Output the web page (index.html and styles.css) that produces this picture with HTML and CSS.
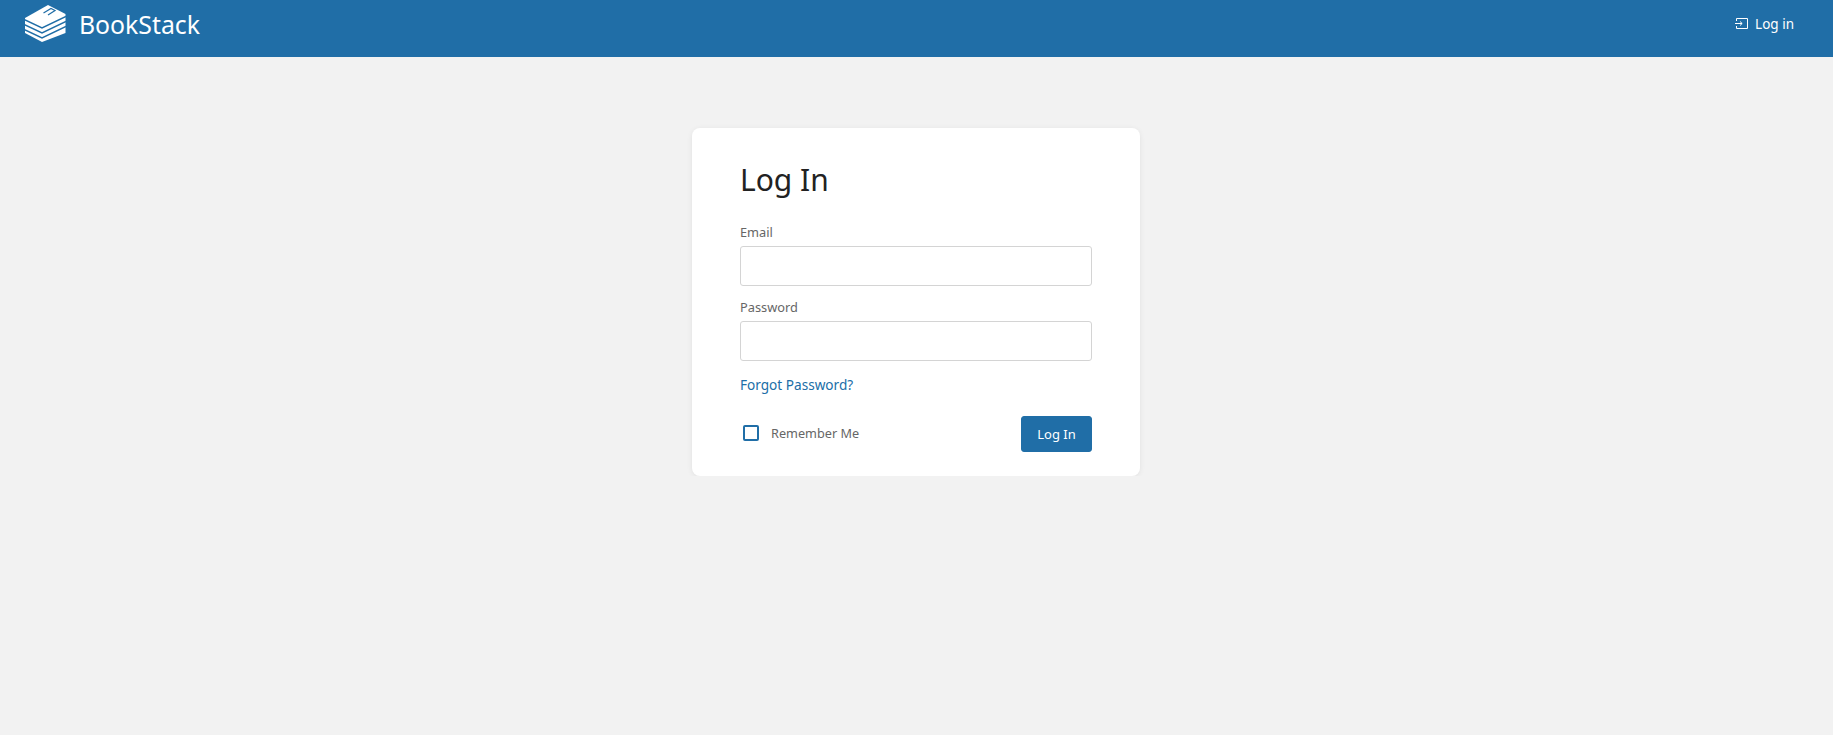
FILE: index.html
```html
<!DOCTYPE html>
<html lang="en">
  <head>
    <meta charset="UTF-8" />
    <meta name="viewport" content="width=device-width, initial-scale=1.0" />
    <title>Log In | BookStack</title>
    <link rel="stylesheet" href="styles.css">
  </head>
  <body>
    <header class="topbar">
      <a class="logo" href="#">
        <svg class="logo-image" viewBox="0 0 42 38" width="42" height="38">
          <path class="logo-fill" d="M24 1 41.500 10V29L18 38 1 29V14Z" />
          <path class="logo-line" d="M0 15.500 18 24 42 12.500" />
          <path class="logo-line" d="M0 20.500 18 29 42 17.500" />
          <path class="logo-line" d="M0 25.500 18 34 42 22.500" />
          <path class="logo-line thin" d="M19.500 9 27 4.500 31 6.500 24 11" />
        </svg>
        <span class="logo-text">BookStack</span>
      </a>
      <a class="login-link" href="#">
        <svg class="login-icon" viewBox="0 0 13 11" width="13" height="11">
          <path d="M1.500 3V.5h11v10h-11V8" />
          <path d="M0 5.500h7M5 3.500l2.200 2-2.200 2" />
        </svg>
        <span>Log in</span>
      </a>
    </header>

    <main class="content">
      <div class="card">
        <h1 class="card-title">Log In</h1>
        <form class="login-form">
          <div class="field">
            <label for="email">Email</label>
            <input id="email" type="text">
          </div>
          <div class="field">
            <label for="password">Password</label>
            <input id="password" type="password">
          </div>
          <a class="forgot" href="#">Forgot Password?</a>
          <div class="form-actions">
            <label class="remember">
              <span class="check-box"></span>
              <span>Remember Me</span>
            </label>
            <button class="button" type="button">Log In</button>
          </div>
        </form>
      </div>
    </main>
  </body>
</html>
```

FILE: styles.css
```css
body {
  margin: 0;
  font-family: "Noto Sans", sans-serif;
  background-color: #f2f2f2;
  color: #444;
}
a {
  text-decoration: none;
}
.topbar {
  height: 57px;
  box-sizing: border-box;
  padding: 0 39px 0 24px;
  background-color: #206ea7;
  display: flex;
  align-items: flex-start;
  justify-content: space-between;
}
.logo {
  display: flex;
  align-items: flex-start;
  gap: 13px;
  color: white;
}
.logo-image {
  margin-top: 4px;
}
.logo-fill {
  fill: white;
}
.logo-line {
  fill: none;
  stroke: #206ea7;
  stroke-width: 1.5;
}
.logo-line.thin {
  stroke-width: 1.2;
}
.logo-text {
  font-size: 24.800px;
  line-height: 48px;
}
.login-link {
  display: flex;
  align-items: center;
  gap: 7px;
  height: 47px;
  color: white;
  font-size: 13.500px;
}
.login-icon {
  fill: none;
  stroke: white;
  stroke-width: 1;
}
.content {
  display: flex;
  justify-content: center;
  padding-top: 71px;
}
.card {
  width: 448px;
  margin-right: 1px;
  box-sizing: border-box;
  padding: 32px 48px 24px;
  background-color: white;
  border-radius: 8px;
  box-shadow: 0 1px 6px -1px rgba(0, 0, 0, 0.1);
}
.card-title {
  margin: 0 0 23px;
  font-size: 30px;
  line-height: 40px;
  font-weight: 400;
  color: #222;
}
.field {
  margin-bottom: 12px;
}
.field label {
  display: block;
  font-size: 12.800px;
  line-height: 18px;
  margin-bottom: 5px;
  color: #666;
}
.field input {
  display: block;
  width: 100%;
  height: 40px;
  box-sizing: border-box;
  padding: 0 8px;
  border: 1px solid #d4d4d4;
  border-radius: 3px;
  background-color: white;
}
.forgot {
  display: block;
  margin-top: 14px;
  font-size: 13.600px;
  line-height: 20px;
  color: #206ea7;
}
.form-actions {
  display: flex;
  align-items: center;
  justify-content: space-between;
  margin-top: 21px;
}
.remember {
  display: flex;
  align-items: center;
  gap: 12px;
  padding-left: 3px;
  padding-bottom: 2px;
  font-size: 12.700px;
  color: #666;
}
.check-box {
  width: 16px;
  height: 16px;
  box-sizing: border-box;
  border: 2px solid #206ea7;
  border-radius: 2px;
}
.button {
  width: 71px;
  height: 36px;
  padding: 0;
  border: 1px solid #206ea7;
  border-radius: 3px;
  background-color: #206ea7;
  color: white;
  font-family: "Noto Sans", sans-serif;
  font-size: 13px;
}
```
